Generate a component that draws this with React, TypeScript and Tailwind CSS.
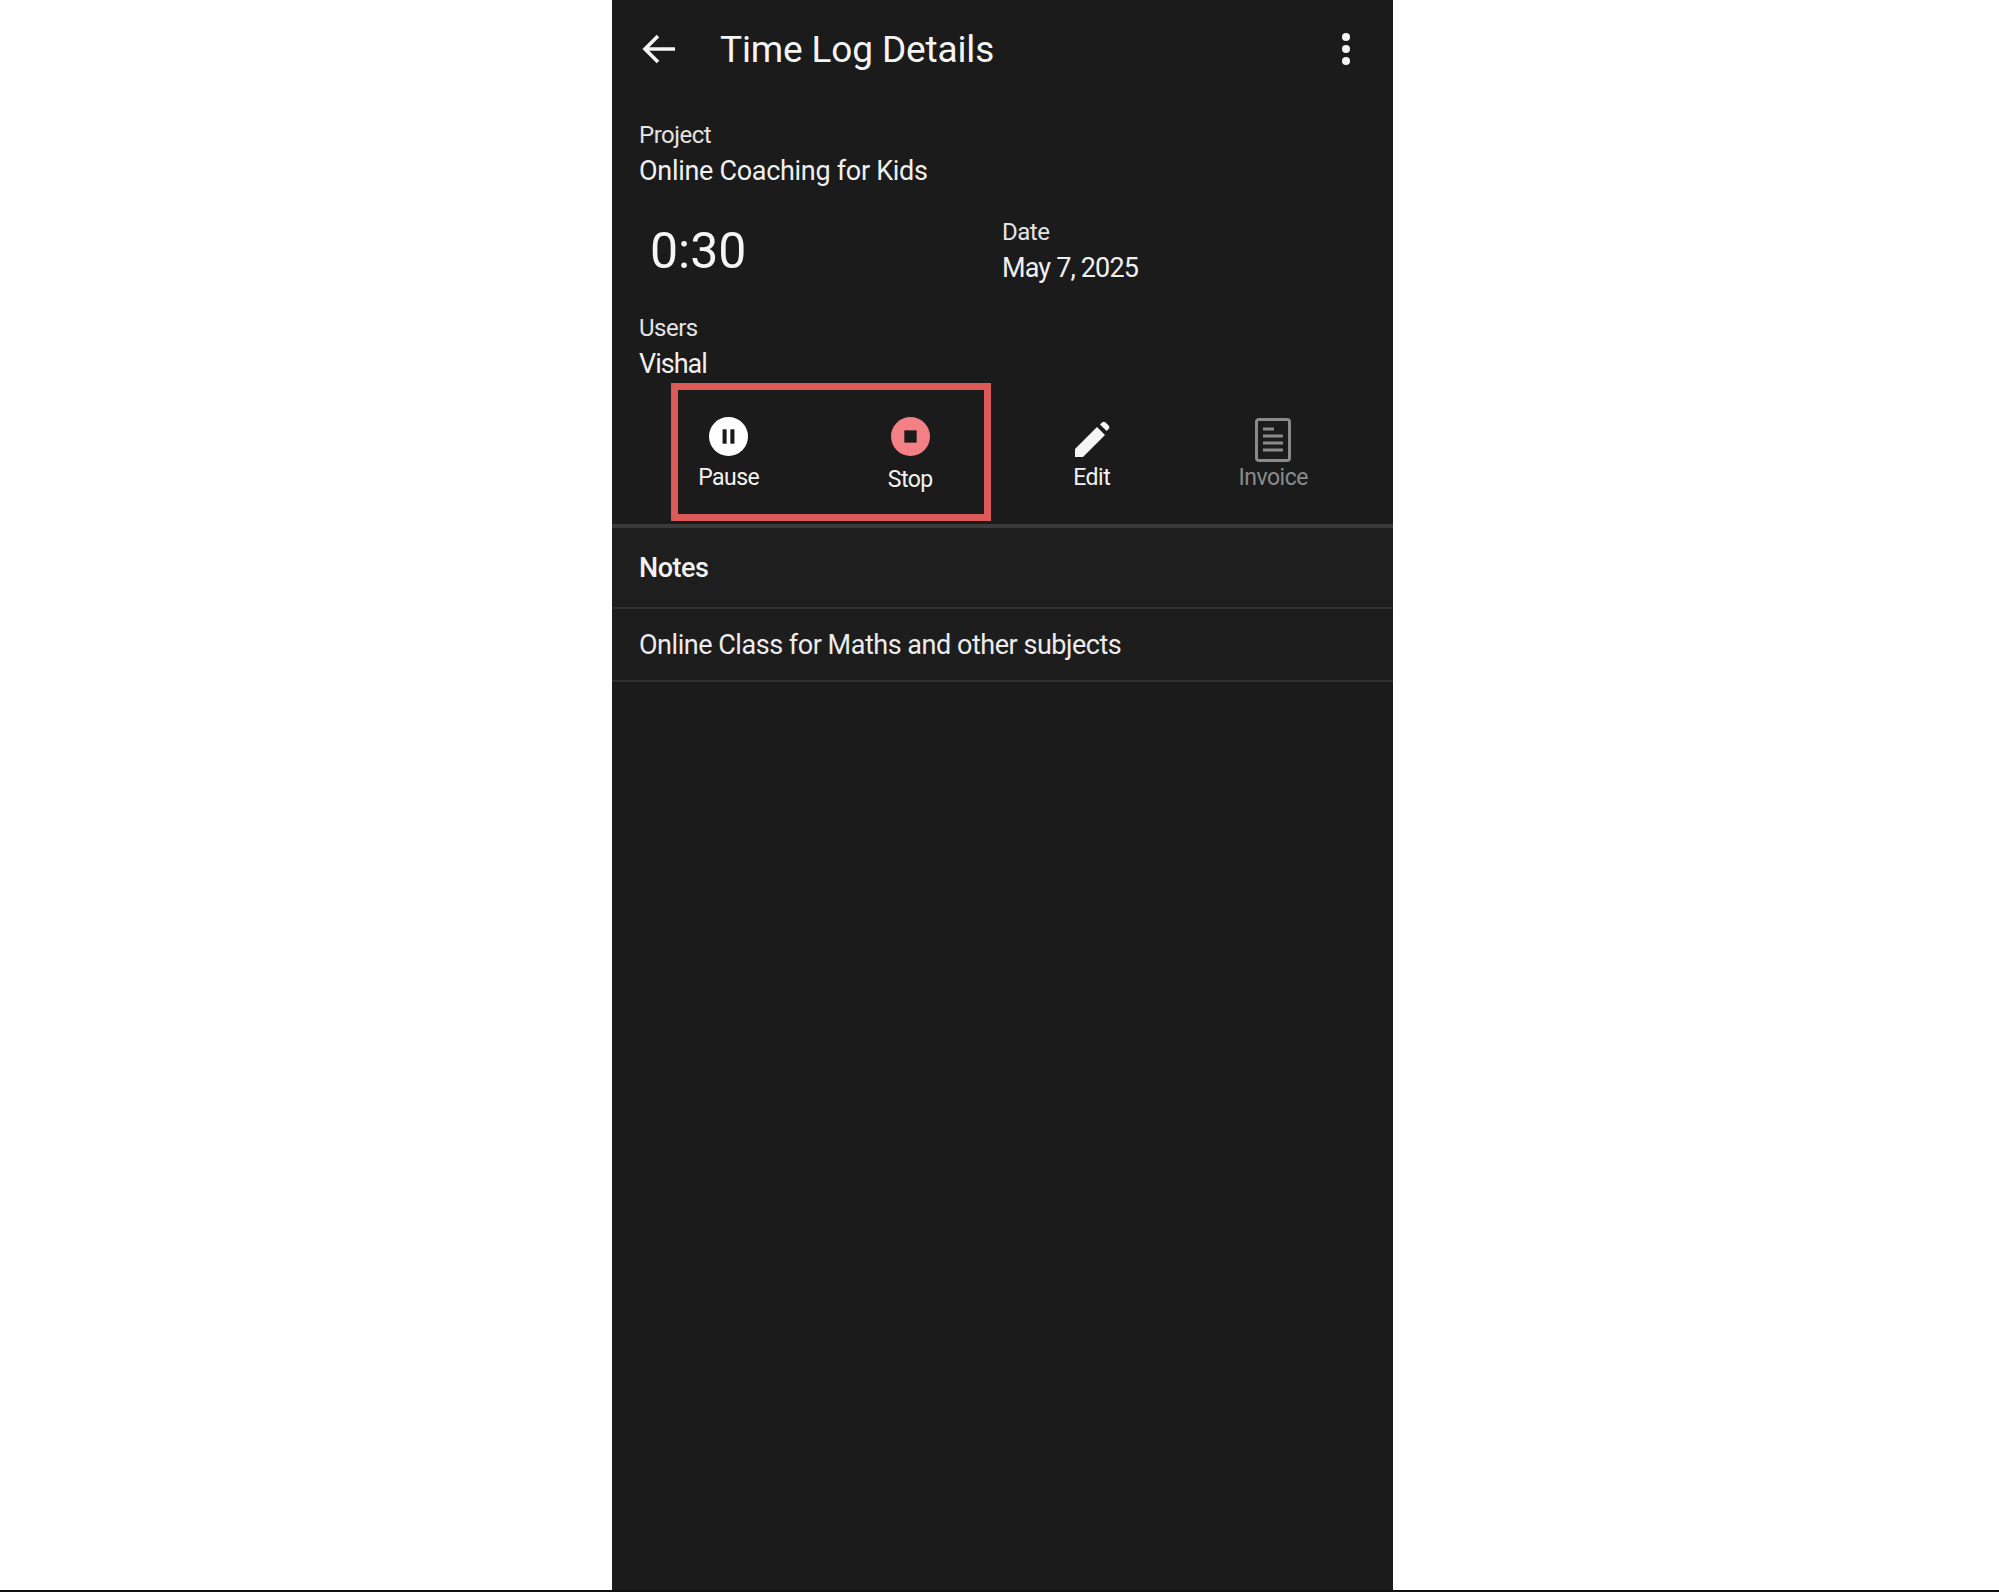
import React from "react";

const font = { fontFamily: '"Roboto", "Liberation Sans", sans-serif' };

function Field({ label, value, valueClass }: { label: string; value: string; valueClass: string }) {
  return (
    <div className="flex flex-col">
      <span className="text-[24px] leading-[36px] text-[#e4e4e4] tracking-[-0.5px]">{label}</span>
      <span className={`text-[27px] leading-[36px] text-[#f0f0f0] ${valueClass}`}>{value}</span>
    </div>
  );
}

function Action({ icon, label, muted, labelClass }: { icon: React.ReactNode; label: string; muted?: boolean; labelClass?: string }) {
  return (
    <div className="flex w-[181.5px] flex-col items-center">
      <div className="flex h-[44px] items-center justify-center">{icon}</div>
      <span className={`text-[23px] leading-[32px] tracking-[-0.5px] ${muted ? "text-[#8a8a8a]" : "text-[#f2f2f2]"} ${labelClass ?? "mt-[4px]"}`}>{label}</span>
    </div>
  );
}

export default function App() {
  return (
    <div className="relative flex h-[1592px] w-full justify-center overflow-hidden bg-white" style={font}>
      <div className="relative ml-[6px] flex h-full w-[781px] flex-col bg-[#1b1b1b]">
        <header className="flex h-[98px] items-center pl-[30px] pr-[42px]">
          <svg width="34" height="30" viewBox="0 0 34 30" fill="none" stroke="#f5f5f5" strokeWidth="3.6" className="shrink-0">
            <path d="M33 15H3M16 2 3 15l13 13" />
          </svg>
          <h1 className="ml-[44px] mt-[2px] flex-1 text-[37px] font-normal tracking-[-0.15px] text-[#f5f5f5]">Time Log Details</h1>
          <svg width="10" height="34" viewBox="0 0 10 34" fill="#f5f5f5" className="shrink-0">
            <circle cx="5" cy="5" r="4" />
            <circle cx="5" cy="17" r="4" />
            <circle cx="5" cy="29" r="4" />
          </svg>
        </header>

        <section className="flex flex-col pl-[27px] pt-[19px]">
          <Field label="Project" value="Online Coaching for Kids" valueClass="tracking-[-0.3px]" />
          <div className="mt-[25px] flex h-[72px] items-center">
            <span className="ml-[11px] mt-[2px] w-[352px] text-[50px] leading-none text-[#f5f5f5]">0:30</span>
            <Field label="Date" value="May 7, 2025" valueClass="tracking-[-0.85px]" />
          </div>
          <div className="mt-[24px]">
            <Field label="Users" value="Vishal" valueClass="tracking-[-1px]" />
          </div>
        </section>

        <section className="mt-[18px] flex h-[124px] pl-[26px] pt-[14px]">
          <Action
            label="Pause"
            icon={
              <svg width="39" height="39" viewBox="0 0 38 38">
                <circle cx="19" cy="19" r="19" fill="#ffffff" />
                <rect x="13.2" y="12" width="4" height="14" fill="#1b1b1b" />
                <rect x="20.8" y="12" width="4" height="14" fill="#1b1b1b" />
              </svg>
            }
          />
          <Action
            label="Stop"
            labelClass="mt-[6px]"
            icon={
              <svg width="39" height="39" viewBox="0 0 38 38">
                <circle cx="19" cy="19" r="19" fill="#f28084" />
                <rect x="13" y="13" width="12" height="12" fill="#1b1b1b" />
              </svg>
            }
          />
          <Action
            label="Edit"
            icon={
              <svg width="36" height="38" viewBox="0 0 36 38" fill="#f5f5f5" className="mt-[8px]">
                <path d="M1 36V28L23 6l8 8L9 36Z" />
                <path d="M26 3.5 28 1.5c1-1 2.6-1 3.6 0l3 3c1 1 1 2.600 0 3.600l-2 2Z" />
              </svg>
            }
          />
          <Action
            label="Invoice"
            muted
            icon={
              <svg width="36" height="44" viewBox="0 0 36 44" fill="none" stroke="#8a8a8a" strokeWidth="3" className="mt-[8px]">
                <rect x="1.500" y="1.500" width="33" height="41" rx="2.500" />
                <path d="M8 11h11M8 18h20M8 25h20M8 32h20" />
              </svg>
            }
          />
        </section>

        <div className="h-[4px] bg-[#3a3a3a]" />
        <div className="flex h-[81px] items-center border-b-2 border-[#303030] bg-[#1e1e1e] pl-[27px] pt-[2px]">
          <span className="text-[27px] font-medium tracking-[-0.5px] text-[#f2f2f2]">Notes</span>
        </div>
        <div className="flex h-[73px] items-center border-b-2 border-[#303030] bg-[#1d1d1d] pl-[27px] pt-[2px]">
          <span className="text-[27px] tracking-[-0.47px] text-[#ececec]">Online Class for Maths and other subjects</span>
        </div>

        <div className="pointer-events-none absolute left-[59px] top-[383px] h-[138px] w-[320px] border-[7px] border-[#dc5b58]" />
      </div>
      <div className="absolute bottom-0 left-0 h-[2px] w-full bg-[#111111]" />
    </div>
  );
}
